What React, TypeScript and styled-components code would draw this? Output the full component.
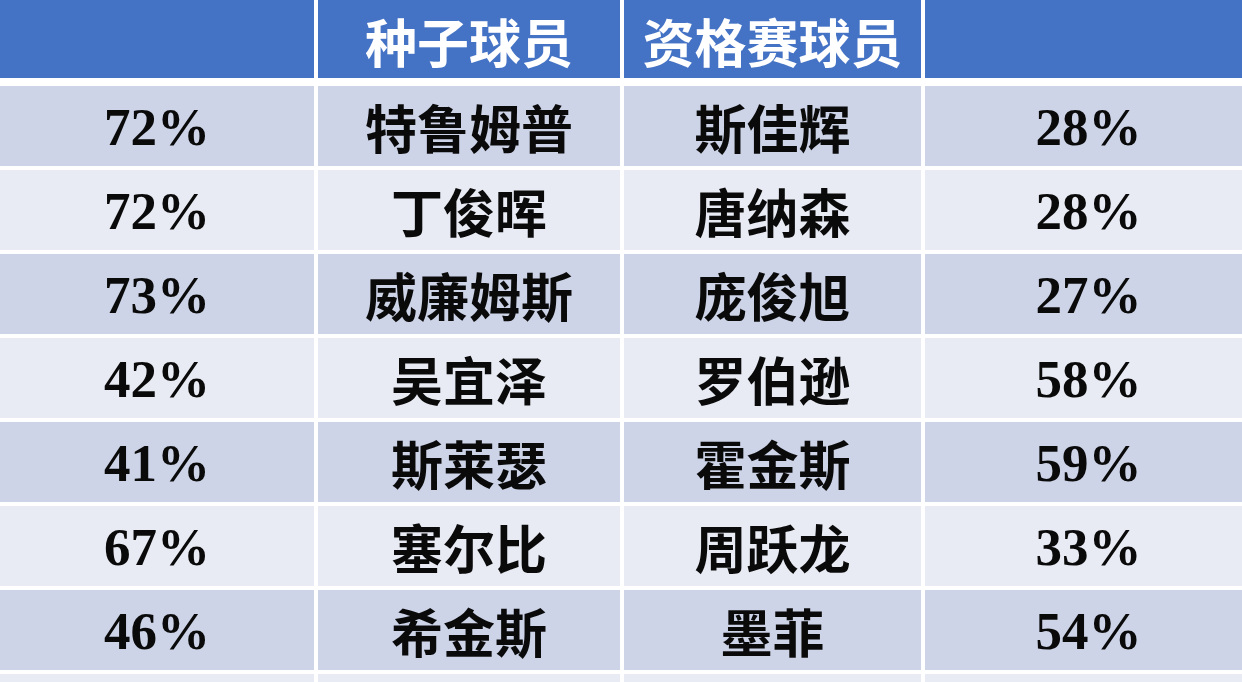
import React from 'react'
import styled, { createGlobalStyle } from 'styled-components'

const GlobalStyle = createGlobalStyle`
  html, body {
    margin: 0;
    padding: 0;
    background: #ffffff;
  }
`

const Table = styled.div`
  width: 1242px;
  height: 682px;
  overflow: hidden;
  background: #ffffff;
  display: flex;
  flex-direction: column;
  gap: 4px;
`

const Row = styled.div<{ $head?: boolean }>`
  display: grid;
  grid-template-columns: 314px 302px 297px 1fr;
  column-gap: 4px;
  height: ${(p) => (p.$head ? '78px' : '80px')};
  flex-shrink: 0;
  margin-bottom: ${(p) => (p.$head ? '4px' : '0')};
`

const Cell = styled.div<{ $band: 'head' | 'dark' | 'light'; $num?: boolean; $edge?: boolean }>`
  display: flex;
  align-items: center;
  justify-content: center;
  background: ${(p) =>
    p.$band === 'head' ? '#4472c4' : p.$band === 'dark' ? '#cdd4e8' : '#e8ebf4'};
  color: ${(p) => (p.$band === 'head' ? '#ffffff' : '#0a0a0a')};
  font-family: ${(p) =>
    p.$num
      ? '"Liberation Serif", "Times New Roman", serif'
      : '"Noto Sans CJK SC", "Noto Sans", sans-serif'};
  font-weight: 700;
  font-size: ${(p) => (p.$num ? '53px' : '52px')};
  line-height: 1;
  padding-top: ${(p) => (p.$band === 'head' ? '4px' : '2px')};
  padding-left: ${(p) => (p.$edge ? '10px' : '0')};
  box-sizing: border-box;
  white-space: nowrap;
`

const rows = [
  ['72%', '特鲁姆普', '斯佳辉', '28%'],
  ['72%', '丁俊晖', '唐纳森', '28%'],
  ['73%', '威廉姆斯', '庞俊旭', '27%'],
  ['42%', '吴宜泽', '罗伯逊', '58%'],
  ['41%', '斯莱瑟', '霍金斯', '59%'],
  ['67%', '塞尔比', '周跃龙', '33%'],
  ['46%', '希金斯', '墨菲', '54%'],
]

export default function App() {
  return (
    <>
      <GlobalStyle />
      <Table>
        <Row $head>
          <Cell $band="head" />
          <Cell $band="head">种子球员</Cell>
          <Cell $band="head">资格赛球员</Cell>
          <Cell $band="head" />
        </Row>
        {rows.map((r, i) => {
          const band = i % 2 === 0 ? 'dark' : 'light'
          return (
            <Row key={i}>
              <Cell $band={band} $num>{r[0]}</Cell>
              <Cell $band={band}>{r[1]}</Cell>
              <Cell $band={band}>{r[2]}</Cell>
              <Cell $band={band} $num $edge>{r[3]}</Cell>
            </Row>
          )
        })}
        <Row>
          <Cell $band="light" />
          <Cell $band="light" />
          <Cell $band="light" />
          <Cell $band="light" />
        </Row>
      </Table>
    </>
  )
}
